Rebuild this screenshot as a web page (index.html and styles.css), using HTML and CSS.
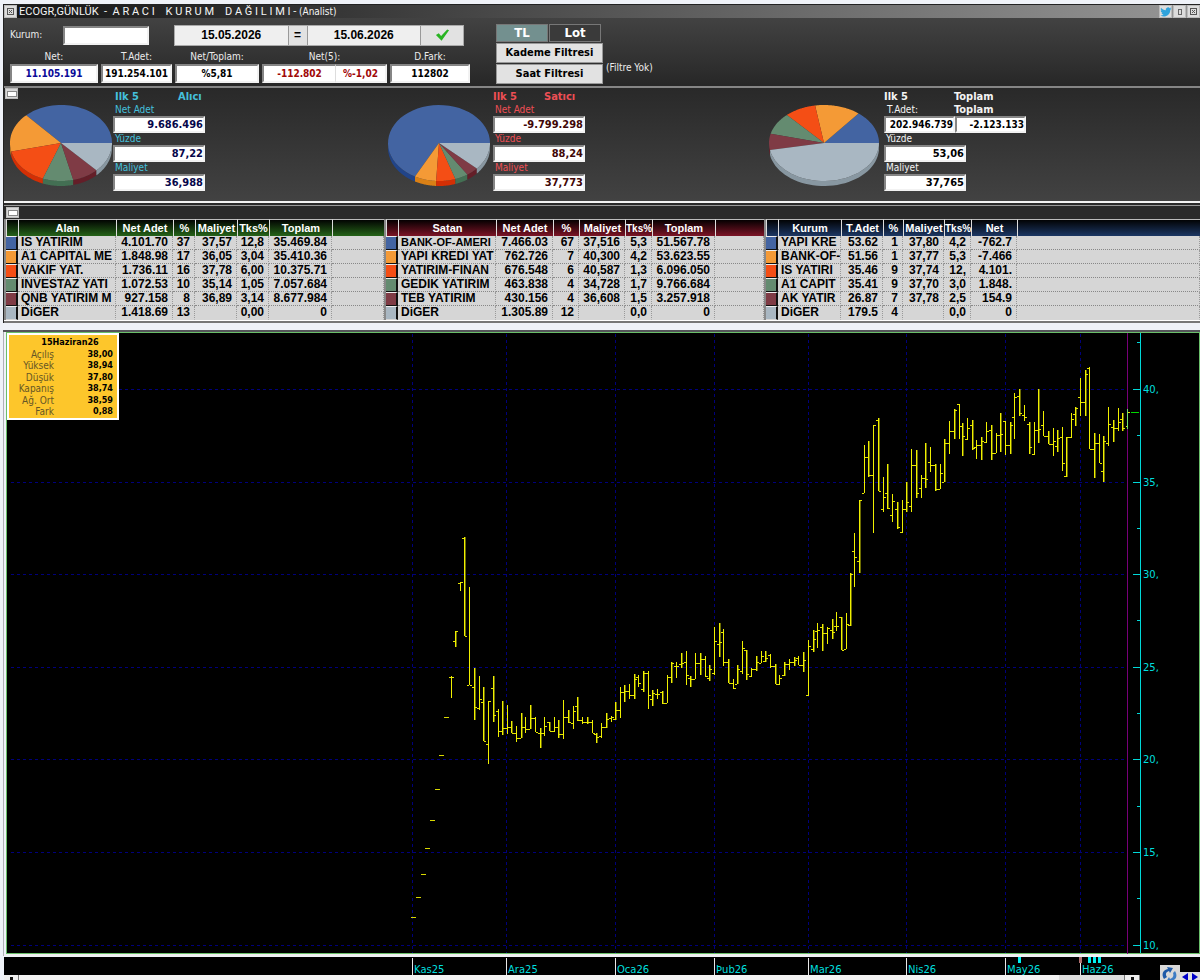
FILE: index.html
```html
<!DOCTYPE html>
<html lang="tr">
<head>
<meta charset="utf-8">
<title>ECOGR - Aracı Kurum Dağılımı</title>
<link rel="stylesheet" href="styles.css">
</head>
<body>
<main class="window">
  <header class="titlebar">
    <button class="sysbtn" aria-label="Menü"><svg viewBox="0 0 10 10"><rect x="1.500" y="1.500" width="6" height="6" fill="none" stroke="#555"/><path d="M3 3l3 3M6 3l-3 3" stroke="#555"/></svg></button>
    <h1 class="title">ECOGR,GÜNLÜK  -  A R A C I    K U R U M    D A Ğ I L I M I - <span class="title-user">(Analist)</span></h1>
    <div class="winbtns">
      <button class="sysbtn bird" aria-label="Twitter"><svg viewBox="0 0 24 24"><path fill="#2fa3dc" d="M23 5c-.8.4-1.700.6-2.600.7.9-.6 1.600-1.400 2-2.500-.9.5-1.900.9-2.900 1.100A4.600 4.600 0 0 0 11.600 8.500C7.800 8.300 4.400 6.500 2.100 3.700c-1.200 2.100-.6 4.800 1.400 6.100-.7 0-1.400-.2-2.100-.6 0 2.200 1.500 4.200 3.700 4.600-.7.2-1.400.2-2.100.1.6 1.800 2.300 3.100 4.300 3.200A9.200 9.200 0 0 1 .6 19C8.800 24 20.500 19.500 20.700 7.400c.9-.6 1.700-1.500 2.300-2.400z"/></svg></button>
      <button class="sysbtn" aria-label="Büyüt"><svg viewBox="0 0 10 10"><rect x="3.500" y="2.500" width="3" height="5" fill="none" stroke="#666"/></svg></button>
      <button class="sysbtn" aria-label="Kapat"><svg viewBox="0 0 10 10"><rect x="1.500" y="1.500" width="6" height="6" fill="none" stroke="#555"/><path d="M3 3l3 3M6 3l-3 3" stroke="#555"/></svg></button>
    </div>
  </header>

  <section class="toolbar">
    <div class="query">
      <div class="query-top">
        <label class="caption" for="kurum">Kurum:</label>
        <input class="field kurum" id="kurum" type="text">
        <div class="dates">
          <button class="date">15.05.2026</button>
          <button class="equals">=</button>
          <button class="date">15.06.2026</button>
          <button class="apply" aria-label="Uygula"><svg viewBox="0 0 16 12"><path d="M1 6l3-2 2.500 3L13 0l2 1L7 12z" fill="#28b422"/></svg></button>
        </div>
      </div>
      <div class="totals">
        <div class="total"><label class="caption" for="net">Net:</label><input class="field navy" id="net" readonly value="11.105.191"></div>
        <div class="total"><label class="caption" for="tadet">T.Adet:</label><input class="field" id="tadet" readonly value="191.254.101"></div>
        <div class="total"><label class="caption" for="nt">Net/Toplam:</label><input class="field" id="nt" readonly value="%5,81"></div>
        <div class="total"><label class="caption" for="net5">Net(5):</label><div class="pair"><input class="field red" id="net5" readonly value="-112.802"><input class="field red" aria-label="Net(5) yüzde" readonly value="%-1,02"></div></div>
        <div class="total"><label class="caption" for="dfark">D.Fark:</label><input class="field" id="dfark" readonly value="112802"></div>
      </div>
    </div>
    <div class="filters">
      <div class="mode"><button class="mode-btn active">TL</button><button class="mode-btn">Lot</button></div>
      <button class="filter-btn">Kademe Filtresi</button>
      <button class="filter-btn">Saat Filtresi</button>
    </div>
    <span class="caption filter-note">(Filtre Yok)</span>
  </section>

  <section class="summary">
    <button class="collapse" aria-label="Daralt"></button>
    <div class="side buyer">
      <svg class="pie" data-values="36.94,16.65,15.63,9.66,8.35,12.77" viewBox="0 0 102 82"></svg>
      <div class="stats">
        <div class="stats-head"><b class="head-a">Ilk 5</b><b class="head-b">Alıcı</b></div>
        <label for="b1">Net Adet</label><input class="field" id="b1" readonly value="9.686.496">
        <label for="b2">Yüzde</label><input class="field" id="b2" readonly value="87,22">
        <label for="b3">Maliyet</label><input class="field" id="b3" readonly value="36,988">
      </div>
    </div>
    <div class="side seller">
      <svg class="pie" data-values="67.2,6.9,6.1,4.2,3.9,11.7" viewBox="0 0 102 82"></svg>
      <div class="stats">
        <div class="stats-head"><b class="head-a">Ilk 5</b><b class="head-b">Satıcı</b></div>
        <label for="s1">Net Adet</label><input class="field" id="s1" readonly value="-9.799.298">
        <label for="s2">Yüzde</label><input class="field" id="s2" readonly value="88,24">
        <label for="s3">Maliyet</label><input class="field" id="s3" readonly value="37,773">
      </div>
    </div>
    <div class="side overall">
      <svg class="pie wide" data-values="14.2,13.4,9.2,9.3,6.9,47" viewBox="0 0 110 82"></svg>
      <div class="stats">
        <div class="stats-head"><b class="head-a">Ilk 5</b><b class="head-b">Toplam</b></div>
        <div class="stats-head second"><label class="head-a" for="o1">T.Adet:</label><label class="head-b strong" for="o4">Toplam</label></div>
        <div class="pair"><input class="field" id="o1" readonly value="202.946.739"><input class="field" id="o4" readonly value="-2.123.133"></div>
        <label for="o2">Yüzde</label><input class="field" id="o2" readonly value="53,06">
        <label for="o3">Maliyet</label><input class="field" id="o3" readonly value="37,765">
      </div>
    </div>
  </section>

  <section class="brokers">
    <div class="brokers-bar"><button class="collapse" aria-label="Daralt"></button></div>
    <div class="tables">
      <table class="grid green">
        <colgroup><col class="w12"><col class="w98"><col class="w57"><col class="w22"><col class="w42"><col class="w32"><col class="w63"><col></colgroup>
        <thead><tr><th></th><th>Alan</th><th>Net Adet</th><th>%</th><th>Maliyet</th><th>Tks%</th><th>Toplam</th><th></th></tr></thead>
        <tbody>
          <tr><td></td><td>IS YATIRIM</td><td>4.101.70</td><td>37</td><td>37,57</td><td>12,8</td><td>35.469.84</td><td></td></tr>
          <tr><td></td><td>A1 CAPITAL ME</td><td>1.848.98</td><td>17</td><td>36,05</td><td>3,04</td><td>35.410.36</td><td></td></tr>
          <tr><td></td><td>VAKIF YAT.</td><td>1.736.11</td><td>16</td><td>37,78</td><td>6,00</td><td>10.375.71</td><td></td></tr>
          <tr><td></td><td>INVESTAZ YATI</td><td>1.072.53</td><td>10</td><td>35,14</td><td>1,05</td><td>7.057.684</td><td></td></tr>
          <tr><td></td><td>QNB YATIRIM M</td><td>927.158</td><td>8</td><td>36,89</td><td>3,14</td><td>8.677.984</td><td></td></tr>
          <tr><td></td><td>DiGER</td><td>1.418.69</td><td>13</td><td></td><td>0,00</td><td>0</td><td></td></tr>
        </tbody>
      </table>
      <table class="grid maroon">
        <colgroup><col class="w12"><col class="w98"><col class="w57"><col class="w26"><col class="w46"><col class="w27"><col class="w63"><col></colgroup>
        <thead><tr><th></th><th>Satan</th><th>Net Adet</th><th>%</th><th>Maliyet</th><th class="tight">Tks%</th><th>Toplam</th><th></th></tr></thead>
        <tbody>
          <tr><td></td><td class="snug">BANK-OF-AMERI</td><td>7.466.03</td><td>67</td><td>37,516</td><td>5,3</td><td>51.567.78</td><td></td></tr>
          <tr><td></td><td>YAPI KREDI YAT</td><td>762.726</td><td>7</td><td>40,300</td><td>4,2</td><td>53.623.55</td><td></td></tr>
          <tr><td></td><td>YATIRIM-FINAN</td><td>676.548</td><td>6</td><td>40,587</td><td>1,3</td><td>6.096.050</td><td></td></tr>
          <tr><td></td><td>GEDIK YATIRIM</td><td>463.838</td><td>4</td><td>34,728</td><td>1,7</td><td>9.766.684</td><td></td></tr>
          <tr><td></td><td>TEB YATIRIM</td><td>430.156</td><td>4</td><td>36,608</td><td>1,5</td><td>3.257.918</td><td></td></tr>
          <tr><td></td><td>DiGER</td><td>1.305.89</td><td>12</td><td></td><td>0,0</td><td>0</td><td></td></tr>
        </tbody>
      </table>
      <table class="grid blue">
        <colgroup><col class="w12"><col class="w63"><col class="w42"><col class="w20"><col class="w41"><col class="w27"><col class="w46"><col></colgroup>
        <thead><tr><th></th><th>Kurum</th><th>T.Adet</th><th>%</th><th>Maliyet</th><th class="tight">Tks%</th><th>Net</th><th></th></tr></thead>
        <tbody>
          <tr><td></td><td>YAPI KRE</td><td>53.62</td><td>1</td><td>37,80</td><td>4,2</td><td>-762.7</td><td></td></tr>
          <tr><td></td><td>BANK-OF-</td><td>51.56</td><td>1</td><td>37,77</td><td>5,3</td><td>-7.466</td><td></td></tr>
          <tr><td></td><td>IS YATIRI</td><td>35.46</td><td>9</td><td>37,74</td><td>12,</td><td>4.101.</td><td></td></tr>
          <tr><td></td><td>A1 CAPIT</td><td>35.41</td><td>9</td><td>37,70</td><td>3,0</td><td>1.848.</td><td></td></tr>
          <tr><td></td><td>AK YATIR</td><td>26.87</td><td>7</td><td>37,78</td><td>2,5</td><td>154.9</td><td></td></tr>
          <tr><td></td><td>DiGER</td><td>179.5</td><td>4</td><td></td><td>0,0</td><td>0</td><td></td></tr>
        </tbody>
      </table>
    </div>
  </section>
</main>

<section class="chart">
  <svg class="plot" id="plot" viewBox="0 330 1200 645" role="img" aria-label="Günlük fiyat grafiği"></svg>
  <div class="ohlc">
    <b class="ohlc-date">15Haziran26</b>
    <span>Açılış</span><b>38,00</b>
    <span>Yüksek</span><b>38,94</b>
    <span>Düşük</span><b>37,80</b>
    <span>Kapanış</span><b>38,74</b>
    <span>Ağ. Ort</span><b>38,59</b>
    <span>Fark</span><b>0,88</b>
  </div>
  <div class="scrollbar">
    <div class="track">
      <button class="arrow" aria-label="Sola kaydır"></button>
      <div class="thumb"></div>
      <button class="arrow" aria-label="Sağa kaydır"></button>
    </div>
    <div class="nav">
      <button class="refresh" aria-label="Yenile"><svg viewBox="0 0 19 19"><path d="M4 14C1 9 3 5 8 4L7 2l6 1-3 5-1-2C6 7 5 9 7 12z" fill="#1d5aa8"/><path d="M15 6c3 5 1 9-4 10l1 2-6-1 3-5 1 2c3-1 4-3 3-6z" fill="#3d7cc4"/></svg></button>
      <button class="step" aria-label="Geri"><svg viewBox="0 0 10 10"><path d="M8 1v8L2 5z" fill="#0000c8"/></svg></button>
      <button class="step" aria-label="İleri"><svg viewBox="0 0 10 10"><path d="M2 1v8l6-4z" fill="#0000c8"/></svg></button>
    </div>
  </div>
</section>
<script src="app.js"></script>
</body>
</html>
```
FILE: styles.css
```css
* { box-sizing: border-box; }
body {
  margin: 0;
  background: #eff2f8;
  font: 10px/12px "DejaVu Sans Condensed", "Noto Sans", sans-serif;
  overflow-x: hidden;
}
button, input { font: inherit; margin: 0; padding: 0; border-radius: 0; min-width: 0; }

.window { margin: 4px 0 0 3px; border: 1px solid #222; border-right: 0; border-bottom: 0; background: #2a2a2a; }

.titlebar {
  display: flex; align-items: center; height: 13px; gap: 2px;
  background: linear-gradient(90deg, #161616, #2c2c2c 20%, #6a6a6a 66%, #969696);
}
.title { margin: 0; flex: 1; color: #f4f4f4; font: 11px/13px Roboto, sans-serif; white-space: pre; }
.title-user { font: 10px/13px "DejaVu Sans Condensed", sans-serif; }
.winbtns { display: flex; gap: 1px; }
.sysbtn { width: 13px; height: 13px; border: 1px solid #bbb; background: #dcdcdc; display: grid; place-items: center; }
.sysbtn svg { width: 10px; height: 10px; display: block; }
.bird svg { width: 12px; height: 12px; }

.toolbar {
  display: flex; height: 68px; padding: 6px 0 0 6px;
  background: linear-gradient(#424242, #272727);
}
.query { width: 459px; display: flex; flex-direction: column; gap: 6px; }
.query-top { display: flex; align-items: center; height: 21px; padding-top: 1px; }
.caption { color: #ececec; }
.query-top .caption { width: 53px; }
.field {
  height: 19px; width: 100%; background: #fff; color: #000; font-weight: bold; text-align: center;
  border: 2px solid; border-color: #858585 #f2f2f2 #f2f2f2 #858585; outline: 0;
}
.kurum { width: 86px; }
.dates { display: flex; margin-left: 25px; width: 290px; height: 21px; background: #999; gap: 1px; border: 1px solid #aaa; }
.dates button { border: 0; background: #e2e2e2; display: grid; place-items: center; font: bold 12px/14px "Liberation Sans", sans-serif; }
.dates .date { flex: 1; background: #efefef; }
.dates .equals { width: 18px; }
.dates .apply { width: 42px; }
.apply svg { width: 15px; height: 12px; }
.totals { display: grid; grid-template-columns: 88px 71px 84px 125px 80px; gap: 3px; }
.total { display: flex; flex-direction: column; text-align: center; gap: 2px; }
.total .caption { line-height: 11px; }
.total .pair .field:first-child { flex: 74; border-right: 0; }
.total .pair .field:last-child { flex: 51; border-left-width: 1px; border-left-color: #ddd; }
.pair { display: flex; }
.navy { color: #0a0a98; }
.red { color: #a00808; }
.filters { width: 107px; margin-left: 27px; display: flex; flex-direction: column; }
.mode { display: grid; grid-template-columns: 52px 52px; gap: 1px; }
.mode-btn { height: 18px; border: 1px solid #777; background: #3a3a3a; color: #fff; font-weight: bold; font-size: 13px; line-height: 16px; }
.mode-btn.active { background: #73908f; }
.filter-btn { height: 20px; margin-top: 1px; border: 1px solid #999; background: #e2e2e2; color: #000; font-weight: bold; font-size: 11px; }
.filter-note { align-self: flex-start; padding: 38px 0 0 3px; }

.summary {
  position: relative; height: 117px; border-top: 2px solid #858585; border-bottom: 2px solid #f4f4f4;
  display: grid; grid-template-columns: 380fr 380fr 436fr;
  background: linear-gradient(#292929, #424242);
}
.collapse { width: 13px; height: 11px; border: 1px solid #bbb; background: #d8d8d8; display: grid; place-items: center; }
.collapse::before { content: ""; width: 8px; height: 4px; border: 1px solid #888; background: #fff; }
.summary > .collapse { position: absolute; left: 1px; top: 0; }
.side { display: flex; padding: 3px 0 0 6px; }
.seller { padding-left: 4px; }
.overall { padding-left: 5px; }
.pie { width: 102px; height: 82px; margin-top: 14px; flex: none; }
.pie.wide { width: 110px; }
.stats { display: flex; flex-direction: column; width: 92px; margin-left: 1px; color: #45c0dc; }
.seller .stats { margin-left: 3px; color: #ee4f55; }
.overall .stats { margin-left: 5px; width: 142px; color: #f4f4f4; }
.stats > label { padding-left: 2px; line-height: 12px; }
.stats-head { display: flex; font-size: 11px; line-height: 12px; height: 13px; }
.head-a { width: 65px; padding-left: 2px; }
.seller .head-a { width: 51px; padding-left: 0; }
.overall .head-a { width: 70px; padding-left: 0; }
.overall .second .head-a { padding-left: 3px; font-size: 10px; }
.second { height: 12px; }
.strong { font-weight: bold; }
.stats .field { height: 17px; text-align: right; font-size: 11px; flex: none; }
.stats .pair .field { flex: 1; font-size: 10px; }
.overall .stats > .field { width: 82px; }
.buyer .field { color: #06064a; }
.seller .field { color: #400606; }

.brokers { margin-top: 2px; border-top: 1px solid #999; border-bottom: 2px solid #777; background: #2a2a2a; }
.brokers-bar { height: 13px; padding: 1px 0 0 2px; }
.tables { display: grid; grid-template-columns: 380fr 380fr 436fr; border-bottom: 1px solid #fff; }
.grid {
  width: 100%; table-layout: fixed; border-collapse: separate; border-spacing: 0;
  border-left: 2px solid #888; background: #d6d6d6;
  font: bold 12px/13px "Liberation Sans", sans-serif;
}
.grid th {
  height: 17px; padding: 0; overflow: hidden; white-space: nowrap; color: #fff; font-size: 11px; line-height: 15px;
  border-left: 1px solid #ddd; border-top: 1px solid #bbb;
}
.grid th.tight { font-size: 10px; }
.grid td {
  height: 14px; padding: 0 4px 0 0; overflow: hidden; white-space: nowrap; text-align: right;
  border-bottom: 1px dotted #888; border-right: 1px dotted #999;
}
.grid td:nth-child(2) { text-align: left; padding: 0 0 0 3px; }
.grid td.snug { font-size: 11px; }
.grid tbody tr:last-child td { border-bottom-color: #d6d6d6; }
.grid td:first-child { border-right: 2px solid #111; border-bottom: 1px solid #111; border-top: 1px solid #eee; }
.grid tr:nth-child(1) td:first-child { background: #4364a2; }
.grid tr:nth-child(2) td:first-child { background: #f49a36; }
.grid tr:nth-child(3) td:first-child { background: #f44e15; }
.grid tr:nth-child(4) td:first-child { background: #648b70; }
.grid tr:nth-child(5) td:first-child { background: #7f3b45; }
.grid tr:nth-child(6) td:first-child { background: #a9b7c2; }
.green th { background: linear-gradient(#020402, #256318); }
.maroon th { background: linear-gradient(#050001, #7c1426); }
.blue th { background: linear-gradient(#020304, #1c3764); }
.w12 { width: 12px; } .w20 { width: 20px; } .w22 { width: 22px; } .w26 { width: 26px; }
.w27 { width: 27px; } .w32 { width: 32px; } .w41 { width: 41px; } .w42 { width: 42px; }
.w46 { width: 46px; } .w57 { width: 57px; } .w63 { width: 63px; } .w98 { width: 98px; }

.chart { position: relative; margin-top: 7px; }
.plot { display: block; width: 100%; height: auto; }
.plot text { font: 10px "DejaVu Sans", sans-serif; fill: #00dede; }
.ohlc {
  position: absolute; left: 7px; top: 3px; width: 112px; height: 87px; padding: 2px 4px 1px 4px;
  display: grid; grid-template-columns: 41px 1fr; align-content: space-between;
  background: #fdc62b; border: 2px solid #fff; font-size: 9px; line-height: 11px; text-align: right;
}
.ohlc span { font-family: "DejaVu Sans Condensed", sans-serif; font-size: 10px; white-space: nowrap; color: #665626; }
.ohlc-date { grid-column: 1 / -1; text-align: center; padding-left: 14px; }
.scrollbar { display: flex; height: 5px; margin-left: 4px; background: #000; position: relative; }
.track { flex: 1; display: flex; justify-content: flex-end; background: #f3f3f3; overflow: hidden; }
.track .arrow:first-child { margin-right: auto; }
.arrow { width: 15px; height: 5px; border: 0; border-right: 1px solid #777; background: #eee; display: flex; justify-content: center; }
.arrow::before { content: ""; width: 3px; height: 3px; margin-top: 2px; background: #111; }
.thumb { width: 66px; background: #ddd; border-right: 1px solid #777; }
.nav { width: 60px; height: 15px; margin-top: -10px; padding-left: 20px; display: flex; align-items: flex-end; overflow: hidden; }
.refresh { width: 20px; height: 15px; border: 0; background: #d9d9d9; display: flex; overflow: hidden; }
.refresh svg { width: 19px; height: 19px; flex: none; }
.step { width: 10px; height: 8px; border: 0; background: #e0e0e0; display: flex; overflow: hidden; }
.step svg { width: 10px; height: 10px; flex: none; }
```
FILE: app.js
```js
const NS = "http://www.w3.org/2000/svg";
function add(parent, name, attrs, text) {
  const el = document.createElementNS(NS, name);
  for (const k in attrs) el.setAttribute(k, attrs[k]);
  if (text) el.textContent = text;
  parent.appendChild(el);
  return el;
}

/* Pies: slices run counter-clockwise from the right, with a lower rim */
const tops = ["#4364a2", "#f49a36", "#f44e15", "#648b70", "#7f3b45", "#a9b7c2"];
const rims = ["#214489", "#d98016", "#d32f05", "#436f53", "#641e28", "#8897a1"];
document.querySelectorAll(".pie").forEach(svg => {
  const vals = svg.dataset.values.split(",").map(Number);
  const sum = vals.reduce((a, b) => a + b, 0);
  const w = svg.viewBox.baseVal.width, cx = w / 2, cy = 38, rx = w / 2, ry = 38, depth = 5;
  const arc = (a, b, dy) => {
    const pts = [];
    for (let i = 0; i <= 40; i++) {
      const t = a + (b - a) * i / 40;
      pts.push((cx + rx * Math.cos(t)).toFixed(1) + "," + (cy + dy - ry * Math.sin(t)).toFixed(1));
    }
    return pts;
  };
  let a = 0;
  vals.forEach((v, i) => {
    const b = a + v / sum * Math.PI * 2;
    if (b > Math.PI) {
      const s = Math.max(a, Math.PI);
      add(svg, "polygon", { points: arc(s, b, 0).concat(arc(b, s, depth)).join(" "), fill: rims[i] });
    }
    add(svg, "polygon", { points: [cx + "," + cy].concat(arc(a, b, 0)).join(" "), fill: tops[i] });
    a = b;
  });
});

/* Price chart */
const plot = document.getElementById("plot");
const rect = (x, y, w, h, fill) => add(plot, "rect", { x, y, width: w, height: h, fill, "shape-rendering": "crispEdges" });
rect(3, 330, 1197, 2, "#55555a");
rect(3, 332, 1, 624, "#b0b0b8");
rect(6, 332, 1194, 622, "#6abf6a");
rect(7, 333, 1192, 620, "#000");
rect(4, 954, 1196, 2, "#f0f0f0");
rect(4, 957, 1196, 18, "#000");

const months = [[412, "Kas25"], [506, "Ara25"], [615, "Oca26"], [714, "Þub26"], [808, "Mar26"], [906, "Nis26"], [1005, "May26"], [1080, "Haz26"]];
const dashed = (x1, y1, x2, y2) => add(plot, "line", { x1, y1, x2, y2, stroke: "#00007c", "stroke-dasharray": "3 3", "shape-rendering": "crispEdges" });
months.forEach(([x, label]) => {
  dashed(x + 0.5, 334, x + 0.5, 953);
  rect(x, 958, 1, 17, "#e8e8e8");
  add(plot, "text", { x: x + 2, y: 973 }, label);
});
const levels = [[389, "40,"], [482, "35,"], [574, "30,"], [667, "25,"], [759, "20,"], [852, "15,"], [945, "10,"]];
levels.forEach(([y, label]) => {
  dashed(11, y + 0.5, 1127, y + 0.5);
  rect(1133, y, 8, 1, "#00d8d8");
  add(plot, "text", { x: 1143, y: y + 4 }, label);
});
[342, 435, 528, 620, 713, 806, 898].forEach(y => rect(1137, y, 4, 1, "#00d8d8"));
rect(1127, 333, 1, 621, "#780078");
rect(1140, 333, 1, 620, "#00d8d8");

[1018, 1088, 1093, 1098].forEach(x => rect(x, 957, 3, 6, "#00f0f0"));
rect(1079, 957, 3, 6, "#b07070");

/* Limit-up days: a single price */
[[411, 917], [416, 897], [421, 874], [425, 848], [430, 820], [435, 789], [439, 755], [444, 717]].forEach(([x, y]) => rect(x, y, 5, 1, "#d8d800"));

/* x, high, low, open, close */
const bars = `451 676 698 677 677;455 631 647 641 631;460 582 591 583 582;464 537 636 538 636;469 587 685 685 685;474 668 720 687 707;479 676 710 708 699;483 687 741 702 741;488 701 764 744 701;493 676 722 688 715;498 709 737 711 731;502 701 735 731 728;507 705 734 728 727;511 721 733 727 733;516 726 742 733 738;521 713 738 738 727;525 717 733 727 729;530 705 729 729 718;535 717 732 718 732;540 728 748 733 733;544 717 736 733 726;549 722 731 722 731;554 717 732 731 727;558 720 738 727 734;563 700 739 734 717;568 710 723 717 722;573 706 729 723 711;577 697 721 706 720;582 717 724 720 722;587 717 724 722 722;592 720 733 722 733;596 733 743 734 737;601 723 738 736 727;606 713 728 727 719;611 716 722 718 717;615 702 720 719 710;620 687 718 710 692;624 685 702 692 691;629 684 699 691 695;634 674 699 695 679;638 675 687 677 683;643 671 692 689 673;648 671 709 673 695;652 690 706 699 693;657 689 699 694 694;662 691 704 692 703;667 675 703 703 677;671 662 683 677 663;676 662 678 666 666;681 653 668 664 663;686 651 685 662 675;690 676 687 678 679;695 653 679 679 663;700 653 675 663 659;705 656 677 659 676;709 665 681 678 669;714 627 675 673 641;719 623 657 644 642;723 629 666 632 662;728 659 683 662 683;733 679 689 683 688;737 665 684 684 669;742 641 674 671 648;746 650 680 650 674;751 668 677 676 669;756 656 671 669 662;761 651 663 663 656;765 651 662 661 658;770 654 668 655 666;775 664 684 666 684;779 675 685 684 678;784 662 676 675 664;789 659 670 664 662;794 657 666 662 660;798 656 665 658 665;803 652 672 665 660;808 640 696 695 646;813 630 652 649 639;817 623 648 631 630;822 624 651 627 633;827 627 644 633 628;832 619 639 630 632;836 612 631 626 626;841 617 650 617 650;846 613 649 649 624;850 573 626 625 574;854 533 587 551 557;859 500 573 561 500;864 445 493 493 457;868 441 477 457 475;873 425 533 475 425;878 418 491 420 491;883 477 512 509 497;887 464 509 493 508;892 494 522 515 501;897 502 529 509 527;902 500 533 532 509;906 482 512 509 502;911 449 512 506 465;916 450 498 465 493;921 475 498 488 478;925 443 488 478 479;930 447 472 462 465;935 464 491 465 489;940 464 489 489 473;944 439 482 482 443;949 421 454 443 431;954 409 439 431 410;959 404 439 404 426;962 423 456 426 436;967 418 440 439 428;972 420 450 425 448;976 440 459 447 445;981 437 460 445 441;986 422 443 442 431;991 425 460 430 453;996 433 453 453 435;1000 413 452 435 434;1005 421 455 421 445;1010 422 454 445 425;1014 393 439 417 397;1019 389 416 396 413;1024 405 421 415 417;1029 422 454 424 447;1034 422 455 454 430;1038 389 443 430 429;1043 411 436 425 436;1048 431 444 436 444;1053 428 456 444 441;1057 430 452 446 438;1062 427 471 437 463;1066 437 477 476 437;1071 413 438 437 419;1075 407 426 414 408;1080 378 416 397 402;1085 370 416 402 374;1089 367 449 368 449;1094 433 478 449 443;1099 434 463 443 463;1103 436 482 471 441;1108 407 446 443 424;1113 420 442 427 428;1118 408 431 428 422;1122 413 431 419 428`;
bars.split(";").forEach((row, i) => {
  const [x, hi, lo, op, cl] = row.split(" ").map(Number);
  if (i % 2) rect(x + 1, hi, 1, lo - hi, "#6e6e00");
  rect(x, hi, 1, lo - hi, "#f0f000");
  rect(x - 2, op, 2, 1, "#e6e600");
  rect(x + 1, cl, 2, 1, "#e6e600");
});
rect(1127, 409, 1, 20, "#70e070");
rect(1126, 426, 1, 1, "#e6e600");
rect(1128, 412, 2, 1, "#e6e600");
rect(1131, 412, 8, 1, "#00d800");
```
